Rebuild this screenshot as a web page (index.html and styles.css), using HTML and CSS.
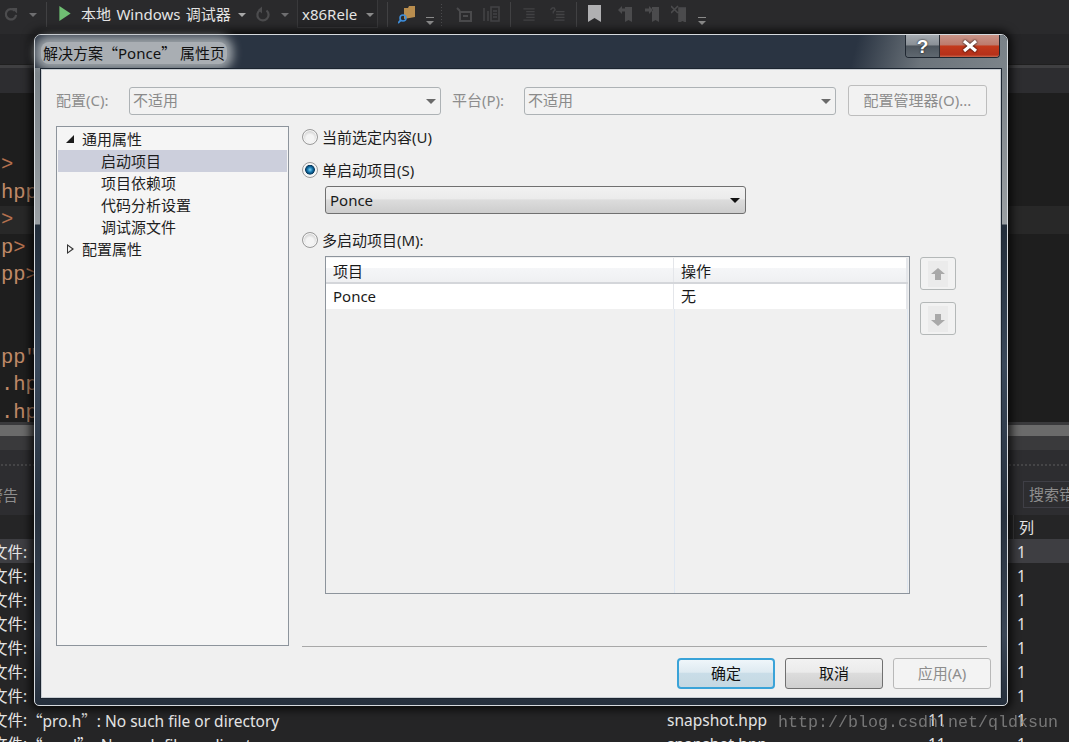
FILE: index.html
```html
<!DOCTYPE html>
<html lang="zh-CN">
<head>
<meta charset="utf-8">
<title>解决方案属性页</title>
<link rel="stylesheet" href="styles.css">
</head>
<body>
<div class="ide">
  <header class="toolbar">
    <svg class="ti t-redo" viewBox="0 0 16 16"><path d="M12.500 4.500A5.500 5.500 0 1 0 14 9" fill="none" stroke="#4c4c4e" stroke-width="2.400"/><path d="M9 1.500h6v6z" fill="#4c4c4e"/></svg>
    <i class="drop d-1"></i>
    <i class="tsep s-1"></i>
    <svg class="ti t-play" viewBox="0 0 12 16"><path d="M0 0l12 8-12 8z" fill="#6fbf73"/></svg>
    <span class="debugger">本地 Windows 调试器</span>
    <i class="drop d-2"></i>
    <svg class="ti t-refresh" viewBox="0 0 16 16"><path d="M11.500 4A5.600 5.600 0 1 1 5 3.600" fill="none" stroke="#4c4c4e" stroke-width="2.200"/><path d="M7 0v7L3 3.500z" fill="#4c4c4e"/></svg>
    <i class="drop d-3"></i>
    <span class="config">x86Rele<i class="drop d-in"></i></span>
    <i class="tsep s-2"></i>
    <svg class="ti t-find" viewBox="0 0 18 19"><path d="M6 3h4l1-2h6v11l-11 2z" fill="#b98d4e"/><circle cx="5" cy="13" r="3" fill="none" stroke="#3f8fdc" stroke-width="1.600"/><path d="M3 15l-3 3" stroke="#3f8fdc" stroke-width="1.800"/></svg>
    <span class="over o-1"></span>
    <i class="grip"></i>
    <svg class="ti t-a" viewBox="0 0 16 16"><path d="M1 1l3 3M4 5h11v9H4zM7 9h5" fill="none" stroke="#4a4a4c" stroke-width="2"/></svg>
    <svg class="ti t-b" viewBox="0 0 17 16"><path d="M1 2v13M5 5v10M8 1h8v14H8zM10 5h4M10 8h4M10 11h4" fill="none" stroke="#434345" stroke-width="1.600"/></svg>
    <i class="tsep s-3"></i>
    <svg class="ti t-c" viewBox="0 0 14 16"><path d="M1 2h12M4 5h9M4 8h9M4 11h9M1 14h12" stroke="#414143" stroke-width="1.400"/></svg>
    <svg class="ti t-d" viewBox="0 0 16 16"><path d="M1 3l2-2h2l1 2-2 2v2M7 5h9M7 8h9M7 11h9M5 14h11" fill="none" stroke="#434345" stroke-width="1.400"/></svg>
    <i class="tsep s-4"></i>
    <svg class="ti t-mark" viewBox="0 0 13 17"><path d="M0 0h13v17l-6.500-4-6.500 4z" fill="#b0b0b2"/></svg>
    <svg class="ti t-m1" viewBox="0 0 14 17"><path d="M7 2h7v15l-3.500-2-3.500 2zM0 5l4-4v2.500h3v3H4V9z" fill="#4b4b4d"/></svg>
    <svg class="ti t-m2" viewBox="0 0 14 17"><path d="M7 2h7v15l-3.500-2-3.500 2zM8 5L4 1v2.500H0v3h4V9z" fill="#4b4b4d"/></svg>
    <svg class="ti t-m3" viewBox="0 0 15 17"><path d="M8 3h7v14l-3.500-2-3.500 2zM0 1l7 7M7 1L0 8" fill="#4b4b4d" stroke="#4b4b4d" stroke-width="1.600"/></svg>
    <span class="over o-2"></span>
  </header>
  <div class="tabs"></div>
  <div class="subtabs"></div>
  <main class="editor">
    <div class="code tag">&gt;</div>
    <div class="code">hpp</div>
    <div class="code cur tag">&gt;</div>
    <div class="code">p<span class="tag">&gt;</span></div>
    <div class="code">pp<span class="tag">&gt;</span></div>
    <div class="code"></div>
    <div class="code"></div>
    <div class="code">pp"</div>
    <div class="code">.hp</div>
    <div class="code">.hp</div>
  </main>
  <div class="hscroll"><i></i></div>
  <section class="panel">
    <div class="grip-row"></div>
    <div class="filters"><span class="warn">警告</span><span class="search">搜索错误列表</span></div>
    <div class="thead"><span class="thcol">列</span></div>
    <div class="err hot"><span>文件:</span><span></span><span></span><span></span><span>1</span></div>
    <div class="err"><span>文件:</span><span></span><span></span><span></span><span>1</span></div>
    <div class="err"><span>文件:</span><span></span><span></span><span></span><span>1</span></div>
    <div class="err"><span>文件:</span><span></span><span></span><span></span><span>1</span></div>
    <div class="err"><span>文件:</span><span></span><span></span><span></span><span>1</span></div>
    <div class="err"><span>文件:</span><span></span><span></span><span></span><span>1</span></div>
    <div class="err"><span>文件:</span><span></span><span></span><span></span><span>1</span></div>
    <div class="err"><span>文件:</span><span><span class="q">“</span>pro.h<span class="q">”</span>: No such file or directory</span><span>snapshot.hpp</span><span>11</span><span>1</span></div>
    <div class="err"><span>文件:</span><span><span class="q">“</span>prod<span class="q">”</span>: No such file or directory</span><span>snapshot.hpp</span><span>11</span><span>1</span></div>
  </section>
</div>

<div class="watermark">http://blog.csdn.net/qldksun</div>

<div class="dialog">
  <div class="titlebar">
    <span class="title">解决方案<span class="q">“</span>Ponce<span class="q">”</span> 属性页</span>
    <div class="caption">
      <span class="cap help">?</span>
      <span class="cap close"><svg viewBox="0 0 16 12" class="xicon"><path d="M2 1l12 10M14 1L2 11" stroke="#fff" stroke-width="3.200"/></svg></span>
    </div>
  </div>
  <div class="client">
    <div class="configrow">
      <label class="dim l-conf">配置(C):</label>
      <span class="combo c-a">不适用<i class="arrow"></i></span>
      <label class="dim l-plat">平台(P):</label>
      <span class="combo c-b">不适用<i class="arrow"></i></span>
      <span class="btn btn-mgr dim">配置管理器(O)...</span>
    </div>
    <div class="body">
      <nav class="tree">
        <div class="node top"><i class="tw open"></i>通用属性</div>
        <div class="node sub sel">启动项目</div>
        <div class="node sub">项目依赖项</div>
        <div class="node sub">代码分析设置</div>
        <div class="node sub">调试源文件</div>
        <div class="node top"><i class="tw closed"></i>配置属性</div>
      </nav>
      <div class="pane">
        <div class="opt o-a"><i class="radio"></i>当前选定内容(U)</div>
        <div class="opt o-b"><i class="radio on"></i>单启动项目(S)</div>
        <div class="select">Ponce<i class="arrow dark"></i></div>
        <div class="opt o-c"><i class="radio"></i>多启动项目(M):</div>
        <div class="tablerow">
          <div class="table">
            <div class="tr th"><span class="c1">项目</span><span class="c2">操作</span></div>
            <div class="tr td"><span class="c1">Ponce</span><span class="c2">无</span></div>
            <div class="tfill"></div>
          </div>
          <div class="moves">
            <span class="move"><svg viewBox="0 0 20 26" class="mv"><rect width="20" height="26" fill="#ebebeb"/><path d="M10 7l7 6h-4v6H7v-6H3z" fill="#a9a9a9"/></svg></span>
            <span class="move"><svg viewBox="0 0 20 26" class="mv"><rect width="20" height="26" fill="#ebebeb"/><path d="M10 20l7-6h-4V8H7v6H3z" fill="#a9a9a9"/></svg></span>
          </div>
        </div>
        <div class="rule"></div>
      </div>
    </div>
    <div class="actions">
      <span class="btn act ok">确定</span>
      <span class="btn act cancel">取消</span>
      <span class="btn act apply dim">应用(A)</span>
    </div>
  </div>
</div>
</body>
</html>
```
FILE: styles.css
```css
* { box-sizing: border-box; }
html, body { margin: 0; height: 100%; }
body {
  width: 1069px; height: 742px; overflow: hidden; position: relative;
  background: #1e1e1e;
  font-family: "Noto Sans", "Noto Sans CJK SC", sans-serif;
  font-size: 15px; color: #1a1a1a;
}
i { font-style: normal; display: block; }
.q { font-family: "Noto Sans CJK SC", sans-serif; }

/* IDE behind the dialog */
.ide { height: 742px; overflow: hidden; display: flex; flex-direction: column; }
.toolbar { height: 34px; flex: none; background: #2a2a2c; position: relative; color: #e4e4e4; }
.ti { position: absolute; display: block; }
.t-redo { left: 3px; top: 6px; width: 15px; height: 16px; }
.t-play { left: 59px; top: 6px; width: 12px; height: 15px; }
.t-refresh { left: 255px; top: 6px; width: 16px; height: 17px; }
.t-find { left: 398px; top: 5px; width: 18px; height: 19px; }
.t-a { left: 456px; top: 7px; width: 16px; height: 16px; }
.t-b { left: 483px; top: 6px; width: 17px; height: 16px; }
.t-c { left: 522px; top: 7px; width: 14px; height: 15px; }
.t-d { left: 549px; top: 7px; width: 16px; height: 15px; }
.t-mark { left: 588px; top: 5px; width: 13px; height: 17px; }
.t-m1 { left: 618px; top: 5px; width: 14px; height: 17px; }
.t-m2 { left: 645px; top: 5px; width: 14px; height: 17px; }
.t-m3 { left: 671px; top: 5px; width: 15px; height: 17px; }
.drop { position: absolute; top: 13px; width: 0; height: 0; border: 4px solid transparent; border-top: 4px solid #6e6e70; border-bottom: 0; }
.d-1 { left: 29px; }
.d-2 { left: 238px; border-top-color: #a8a8a8; }
.d-3 { left: 281px; }
.d-in { left: 68px; border-top-color: #8a8a8a; }
.tsep { position: absolute; top: 2px; width: 1px; height: 25px; background: #414143; }
.s-1 { left: 46px; }
.s-2 { left: 387px; }
.s-3 { left: 510px; }
.s-4 { left: 576px; }
.debugger { position: absolute; left: 81px; top: 4px; font-size: 15px; line-height: 20px; white-space: nowrap; word-spacing: 1.500px; }
.config { position: absolute; left: 297px; top: 0; width: 81px; height: 28px; background: #262628; border: 1px solid #39393b; border-top: 0; padding-left: 4px; line-height: 28px; overflow: hidden; white-space: nowrap; font-size: 15px; }
.over { position: absolute; top: 17px; width: 8px; height: 8px; border-top: 1px solid #8a8a8a; }
.over::after { content: ""; position: absolute; left: 0; top: 3px; border: 4px solid transparent; border-top: 4px solid #8a8a8a; border-bottom: 0; }
.o-1 { left: 426px; }
.o-2 { left: 698px; }
.grip { position: absolute; left: 440px; top: 3px; width: 4px; height: 23px; background-image: radial-gradient(#4b4b4d 1px, transparent 1px); background-size: 3px 3px; }

.tabs { height: 31px; flex: none; background: #252527; border-bottom: 1px solid #1f1f1f; }
.subtabs { height: 28px; flex: none; background: #2d2d30; border-top: 3px solid #3f3f41; }
.editor { height: 329px; flex: none; background: #1e1e1e; padding-top: 58px; }
.code { height: 27.500px; line-height: 27.500px; padding-left: 1px; font-family: "Liberation Mono", monospace; font-size: 20.500px; color: #c08a68; white-space: pre; }
.tag { color: #b4704e; }
.cur { background: #282828; }
.hscroll { height: 28px; flex: none; background: #3a3a3c; padding-top: 3px; }
.hscroll i { height: 11px; background: #6b6b6b; }

.panel { flex: 1; background: #252526; color: #e4e4e4; font-size: 15.500px; }
.grip-row { height: 30px; background: #2d2d30; background-image: radial-gradient(#454547 1px, transparent 1px); background-size: 4px 4px; background-position: 0 13px; background-repeat: repeat-x; }
.filters { height: 35px; background: #2d2d30; position: relative; color: #8e8e8e; }
.warn { position: absolute; left: -12px; top: 4px; font-size: 15px; }
.search { position: absolute; left: 1023px; top: 1px; width: 100px; height: 27px; border: 1px solid #3f3f46; padding-left: 5px; font-size: 15px; line-height: 25px; white-space: nowrap; }
.thead { height: 24px; background: #252526; position: relative; }
.thcol { position: absolute; left: 1013px; top: 0; height: 24px; padding-left: 5px; border-left: 1px solid #3a3a3c; line-height: 24px; font-size: 15px; }
.err { display: grid; grid-template-columns: 35px 640px 261px 89px 1fr; margin-left: -8px; height: 24px; line-height: 26px; white-space: nowrap; }
.hot { background: #3e3e42; }

.watermark { position: absolute; left: 778px; top: 712px; font-family: "Liberation Mono", monospace; font-size: 16.670px; line-height: 22px; color: #8b8b8b; opacity: .8; white-space: nowrap; }

/* Dialog window */
.dialog {
  position: absolute; left: 34px; top: 34px; width: 974px; height: 672px;
  border: 1px solid #d6dade; border-radius: 7px 7px 5px 5px;
  box-shadow: 0 0 10px 3px rgba(0,0,0,.85);
  padding: 0 5px 6px;
  display: flex; flex-direction: column;
  background: linear-gradient(180deg, #2a3442 0, #2a3442 33px, #7a8288 33px, #9a9fa3 189px, #222d3a 190px, #39485a 330px, #27313e 480px, #3a4656 600px, #252f3c 670px);
}
.titlebar {
  height: 33px; flex: none; margin: 0 -5px; padding-left: 6px; display: flex; align-items: flex-start;
  border-radius: 6px 6px 0 0;
  background: linear-gradient(105deg, #2a3442 0, #2a3442 84%, #6c747b 91%, #7c848a 100%);
}
.title {
  margin-top: 7px; height: 22px; line-height: 22px; padding: 0 2px; white-space: pre; font-size: 15px; color: #111;
  background: #a9aeb3; box-shadow: 0 0 10px 6px rgba(169,174,179,.9); border-radius: 8px;
}
.caption { margin-left: auto; margin-right: 7px; display: flex; height: 23px; border: 1px solid #1f2731; border-top: 0; border-radius: 0 0 4px 4px; overflow: hidden; }
.cap { display: flex; align-items: center; justify-content: center; }
.help { width: 34px; background: linear-gradient(180deg, #a4aab0 0, #8a9096 45%, #4e565e 50%, #5f6870 100%); color: #fff; font: bold 19px/1 "Liberation Sans", sans-serif; text-shadow: 0 0 2px #000; border-right: 1px solid #2a2f36; }
.close { width: 59px; background: linear-gradient(180deg, #c99488 0, #bd7a6c 45%, #c33a1c 50%, #b5301a 90%, #c96a50 100%); }
.xicon { width: 16px; height: 12px; filter: drop-shadow(0 0 1px #000); }

.client {
  flex: 1; min-height: 0; background: #f0f0f0;
  border: 1px solid #1c2530; box-shadow: 0 0 0 1px #c9ced3 inset;
  padding: 16px 0 0;
  display: flex; flex-direction: column; position: relative;
}
.dim { color: #8d8d8d; }
.configrow { display: flex; align-items: center; height: 31px; padding-left: 15px; flex: none; }
.l-conf { width: 73px; padding-bottom: 2px; }
.l-plat { width: 72px; margin-left: 11px; padding-bottom: 2px; }
.combo { width: 312px; height: 28px; border: 1px solid #adb2b5; border-radius: 3px; background: #f2f2f2; color: #8a8a8a; line-height: 24px; padding-left: 3px; position: relative; }
.arrow { position: absolute; right: 4px; top: 11px; border: 5px solid transparent; border-top: 5px solid #6a6a6a; border-bottom: 0; }
.arrow.dark { border-top-color: #111; right: 5px; top: 11px; }
.btn { display: flex; align-items: center; justify-content: center; border-radius: 3px; }
.btn-mgr { width: 139px; height: 31px; margin-left: 12px; border: 1px solid #bdbdbd; background: #f2f2f2; padding-bottom: 2px; }

.body { display: flex; flex: none; height: 521px; margin-top: 10px; padding-left: 15px; }
.tree { width: 233px; height: 520px; flex: none; border: 1px solid #8d949c; background: #f5f5f5; padding: 1px 1px 0; color: #1e1e1e; }
.node { height: 22px; line-height: 22px; white-space: nowrap; position: relative; }
.top { padding-left: 24px; }
.sub { padding-left: 43px; }
.sel { background: #cccfdc; }
.tw { position: absolute; width: 0; height: 0; }
.open { left: 8px; top: 7px; border-bottom: 8px solid #1c1c1c; border-left: 8px solid transparent; }
.closed { left: 9px; top: 6px; width: 7px; height: 10px; }
.closed::before { content: ""; position: absolute; left: 0; top: 0; border: 5px solid transparent; border-left: 7px solid #333; border-right: 0; }
.closed::after { content: ""; position: absolute; left: 1px; top: 2px; border: 3px solid transparent; border-left: 4px solid #f5f5f5; border-right: 0; }

.pane { flex: 1; padding-left: 13px; display: flex; flex-direction: column; min-width: 0; }
.opt { display: flex; align-items: center; height: 22px; gap: 4px; padding-bottom: 2px; color: #1e1e1e; white-space: nowrap; }
.o-b { margin-top: 11px; }
.o-c { margin-top: 15px; }
.radio { width: 16px; height: 16px; margin-top: 2px; border-radius: 50%; border: 1px solid #9a9a9a; background: radial-gradient(circle at 50% 60%, #f4f4f4 0 35%, #cfcfcf 70%, #e8e8e8 100%); box-shadow: inset 0 0 0 1px #f8f8f8; }
.radio.on { background: radial-gradient(circle at 50% 48%, #7fd4f5 0, #1878b0 2.500px, #063a60 4.500px, #f4f4f4 5.200px); }
.select { width: 421px; height: 28px; margin: 5px 0 0 23px; border: 1px solid #707070; border-radius: 3px; padding-left: 4px; line-height: 26px; position: relative; background: linear-gradient(180deg, #f2f2f2 0, #ebebeb 45%, #dcdcdc 50%, #cdcdcd 100%); }
.tablerow { display: flex; margin: 5px 0 0 23px; }
.table { width: 585px; height: 338px; border: 1px solid #8d949c; background: #f0f0f0; padding-top: 1px; display: flex; flex-direction: column; }
.tr { display: flex; flex: none; }
.th { height: 26px; line-height: 26px; background: linear-gradient(180deg, #fff 0 40%, #f5f6f8 41%, #eff0f2 100%); border-bottom: 2px solid #d4d6da; margin-right: 1px; }
.td { height: 25px; line-height: 25px; background: #fff; margin-right: 1px; }
.c1 { width: 348px; padding-left: 7px; border-right: 1px solid #e4e6ea; }
.c2 { flex: 1; padding-left: 7px; border-right: 2px solid #e4e6ea; }
.tfill { flex: 1; margin-left: 348px; margin-right: 1px; border-left: 1px solid #e0e8f2; background: linear-gradient(90deg, #f0f0f0 0, #f0f0f0 99.500%, #e0e8f2 99.600%); }
.moves { margin-left: 10px; display: flex; flex-direction: column; gap: 12px; padding-top: 1px; }
.move { width: 36px; height: 33px; border: 1px solid #b4b8b8; border-radius: 3px; background: #f2f2f2; display: flex; align-items: center; justify-content: center; }
.mv { width: 20px; height: 26px; display: block; }
.rule { width: 685px; height: 1px; margin-top: 52px; background: #a8a8a8; flex: none; }
.actions { display: flex; gap: 10px; padding: 11px 0 0 636px; flex: none; }
.act { width: 98px; height: 31px; padding-bottom: 2px; }
.ok { border: 2px solid #3aa3d8; border-radius: 4px; background: linear-gradient(180deg, #eff6fa 0, #deeaf1 45%, #c9dde8 50%, #c5d8e2 100%); color: #111; }
.cancel { border: 1px solid #707070; background: linear-gradient(180deg, #f2f2f2 0, #ebebeb 45%, #dcdcdc 50%, #cfcfcf 100%); color: #111; }
.apply { border: 1px solid #b8b8b8; background: #f3f3f3; }
```
